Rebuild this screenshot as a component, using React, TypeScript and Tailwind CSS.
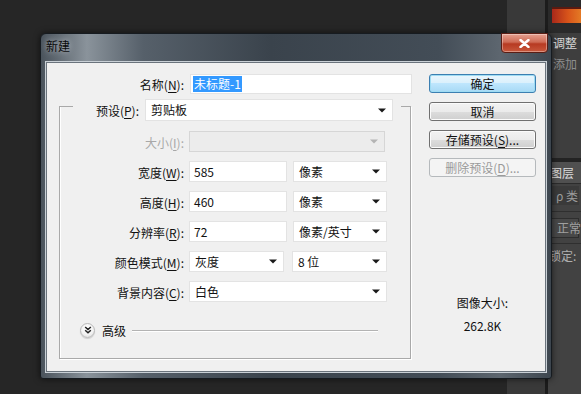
import type { ReactNode } from 'react'

function U({ c }: { c: string }) {
  return <span className="underline underline-offset-[2px]">{c}</span>
}

function Arrow({ dim }: { dim?: boolean }) {
  return (
    <svg width="8" height="5" viewBox="0 0 8 5" className="shrink-0">
      <path d="M0 0.5h8L4 4.5z" fill={dim ? '#b4b4b4' : '#1a1a1a'} />
    </svg>
  )
}

function Combo({ w, text, dim }: { w: string; text?: string; dim?: boolean }) {
  return (
    <div
      className={`flex h-[21px] ${w} items-center justify-between border pl-[5px] pr-[6px] ${
        dim ? 'border-[#d6d6d6] bg-[#ececec]' : 'border-[#e3e3e3] bg-white'
      }`}
    >
      <span className="text-[12px] leading-none text-[#111]">{text}</span>
      <Arrow dim={dim} />
    </div>
  )
}

function Input({ w, children }: { w: string; children?: ReactNode }) {
  return (
    <div className={`flex h-[21px] ${w} items-center border border-[#e3e3e3] bg-white pl-[4px] text-[12px] leading-none text-[#111]`}>
      {children}
    </div>
  )
}

function Row({ label, children, dim, gap = 'gap-[6px]' }: { label: ReactNode; children: ReactNode; dim?: boolean; gap?: string }) {
  return (
    <div className="mt-[9px] flex h-[21px] items-center gap-[5px]">
      <div className={`w-[124px] pt-[2px] text-right text-[12px] leading-none ${dim ? 'text-[#a8a8a8]' : 'text-[#111]'}`}>
        {label}
      </div>
      <div className={`flex ${gap}`}>{children}</div>
    </div>
  )
}

function Btn({ children, kind }: { children: ReactNode; kind?: 'default' | 'disabled' }) {
  const look =
    kind === 'default'
      ? 'border-[#3c7fb1] bg-[linear-gradient(#eaf6fd_0%,#d9f0fc_50%,#bee6fd_50%,#a7d9f5_100%)] shadow-[inset_0_0_0_1px_#9fdcf3] text-[#111]'
      : kind === 'disabled'
        ? 'border-[#b5b9bc] bg-[#f4f4f4] text-[#9a9a9a]'
        : 'border-[#707070] bg-[linear-gradient(#f2f2f2_0%,#ebebeb_50%,#dddddd_50%,#cfcfcf_100%)] shadow-[inset_0_0_0_1px_#fbfbfb] text-[#111]'
  return (
    <div className={`flex h-[19px] w-[107px] items-center justify-center rounded-[3px] border text-[12px] leading-none ${look}`}>
      {children}
    </div>
  )
}

function Dialog() {
  return (
    <div className="absolute left-[40px] top-[33px] flex h-[346px] w-[512px] flex-col rounded-t-[6px] rounded-b-[3px] border border-[#161b20] bg-[linear-gradient(90deg,#4a535c_0%,#8a939b_9%,#56606a_20%,#3a434c_45%,#434d57_78%,#5d666f_90%,#3d464f_100%)] px-[5px] pb-[6px] shadow-[0_0_6px_rgba(0,0,0,0.6)]">
      {/* title bar */}
      <div className="flex h-[28px] shrink-0 items-start justify-between">
        <span className="mt-[6px] text-[12px] leading-none text-[#0a0a0a] [text-shadow:0_0_6px_#c8ced4]">新建</span>
        <div className="-mt-px mr-[-2px] flex h-[20px] w-[47px] items-center justify-center rounded-b-[4px] border border-[#5a1d14] bg-[linear-gradient(#e5a090_0%,#cf6b55_45%,#b73a22_55%,#c8583c_100%)] shadow-[inset_0_0_0_1px_rgba(255,255,255,0.35)]">
          <svg width="11" height="9" viewBox="0 0 11 9">
            <path d="M1.5 1l8 7M9.5 1l-8 7" stroke="#fff" strokeWidth="2.4" strokeLinecap="round" />
          </svg>
        </div>
      </div>

      {/* client area */}
      <div className="flex flex-1 border border-[#6a737c] bg-[#f0f0f0] shadow-[0_0_0_1px_#c9d0d6]">
        {/* left side */}
        <div className="flex w-[382px] shrink-0 flex-col">
          <div className="mt-[11px] flex h-[20px] items-center gap-[6px]">
            <div className="w-[137px] pt-[2px] text-right text-[12px] leading-none text-[#111]">
              名称(<U c="N" />):
            </div>
            <div className="flex h-[20px] w-[222px] items-center border border-[#e3e3e3] bg-white pl-[2px]">
              <span className="bg-[#3399ff] px-[1px] py-[2px] text-[12px] leading-none text-white">未标题-1</span>
            </div>
          </div>

          {/* group box */}
          <div className="ml-[12px] mt-[12px] flex h-[253px] w-[352px] flex-col border-x border-b border-[#a9a9a9] shadow-[inset_1px_0_0_#fff,1px_1px_0_#fff]">
            <div className="-mt-[7px] flex h-[22px] items-start">
              <div className="mt-[7px] h-px w-[13px] bg-[#a9a9a9]" />
              <div className="flex h-[22px] w-[66px] items-center justify-end pt-[2px] text-[12px] leading-none text-[#111]">
                预设(<U c="P" />):
              </div>
              <div className="w-[6px]" />
              <div className="flex h-[22px] w-[248px] items-center justify-between border border-[#e3e3e3] bg-white pl-[5px] pr-[6px]">
                <span className="text-[12px] leading-none text-[#111]">剪贴板</span>
                <Arrow />
              </div>
              <div className="w-[8px]" />
              <div className="mt-[7px] h-px flex-1 bg-[#a9a9a9]" />
            </div>

            <div className="h-[1px]" />
            <Row label={<>大小(<U c="I" />):</>} dim>
              <Combo w="w-[196px]" dim />
            </Row>
            <Row label={<>宽度(<U c="W" />):</>}>
              <Input w="w-[98px]">585</Input>
              <Combo w="w-[94px]" text="像素" />
            </Row>
            <Row label={<>高度(<U c="H" />):</>}>
              <Input w="w-[98px]">460</Input>
              <Combo w="w-[94px]" text="像素" />
            </Row>
            <Row label={<>分辨率(<U c="R" />):</>}>
              <Input w="w-[98px]">72</Input>
              <Combo w="w-[94px]" text="像素/英寸" />
            </Row>
            <Row label={<>颜色模式(<U c="M" />):</>} gap="gap-[8px]">
              <Combo w="w-[95px]" text="灰度" />
              <Combo w="w-[95px]" text="8 位" />
            </Row>
            <Row label={<>背景内容(<U c="C" />):</>}>
              <Combo w="w-[198px]" text="白色" />
            </Row>

            <div className="mt-[20px] flex h-[16px] items-center">
              <div className="ml-[20px] flex h-[15px] w-[15px] items-center justify-center rounded-full border border-[#b9b9b9] bg-[radial-gradient(circle_at_50%_35%,#ffffff_0%,#f3f3f3_55%,#d6d6d6_100%)] shadow-[0_1px_1px_rgba(0,0,0,0.15)]">
                <svg width="8" height="8" viewBox="0 0 8 8">
                  <path d="M1.2 1l2.8 2.6L6.8 1M1.2 4.2l2.8 2.6 2.8-2.6" fill="none" stroke="#222" strokeWidth="1.5" />
                </svg>
              </div>
              <span className="ml-[7px] pt-[1px] text-[12px] leading-none text-[#111]">高级</span>
              <div className="ml-[6px] h-px w-[246px] bg-[#b3b3b3] shadow-[0_1px_0_#fff]" />
            </div>
          </div>
        </div>

        {/* right side */}
        <div className="flex w-[107px] shrink-0 flex-col items-center">
          <div className="mt-[11px] flex flex-col gap-[9px]">
            <Btn kind="default">确定</Btn>
            <Btn>取消</Btn>
            <Btn>
              存储预设(<U c="S" />)...
            </Btn>
            <Btn kind="disabled">
              删除预设(<U c="D" />)...
            </Btn>
          </div>
          <div className="mt-[118px] text-[12px] leading-[16px] text-[#111]">图像大小:</div>
          <div className="mt-[7px] text-[12px] leading-[16px] text-[#111]">262.8K</div>
        </div>
      </div>
    </div>
  )
}

function SidePanel() {
  return (
    <div className="flex w-[33px] shrink-0 flex-col overflow-hidden whitespace-nowrap bg-[#424242] text-[12px] leading-none">
      <div className="h-[33px] shrink-0 bg-[#2a2a2a] pt-[7px]">
        <div className="ml-[4px] h-[16px] w-[40px] bg-[linear-gradient(90deg,#a8281a_0%,#d8541a_40%,#ee9a2e_100%)] shadow-[inset_0_2px_0_#5a1a10]" />
      </div>
      <div className="flex h-[125px] shrink-0 flex-col bg-[#3e3e3e] pl-[5px]">
        <span className="mt-[4px] text-[#d8d8d8]">调整</span>
        <span className="mt-[9px] text-[#8e8e8e]">添加</span>
      </div>
      <div className="h-[4px] shrink-0 bg-[#232323]" />
      <div className="flex h-[21px] shrink-0 items-center bg-[#505050] pl-[2px] text-[#dcdcdc]">图层</div>
      <div className="h-px shrink-0 bg-[#2c2c2c]" />
      <div className="mx-[2px] mt-[2px] flex h-[19px] shrink-0 items-center bg-[#3a3a3a] pl-[6px] text-[#9a9a9a]">ρ 类</div>
      <div className="mt-[6px] h-px shrink-0 bg-[#2f2f2f]" />
      <div className="mx-[2px] mt-[6px] flex h-[20px] shrink-0 items-center border border-[#2e2e2e] bg-[#484848] pl-[6px] text-[#a0a0a0]">
        正常
      </div>
      <div className="mt-[5px] h-px shrink-0 bg-[#2f2f2f]" />
      <div className="mt-[6px] pl-[1px] text-[#b0b0b0]">锁定:</div>
    </div>
  )
}

export default function App() {
  return (
    <div className="relative flex h-[394px] w-[581px] overflow-hidden bg-[#262626] font-['Noto_Sans_CJK_SC',sans-serif]">
      <div className="flex-1" />
      <div className="w-[38px] shrink-0 bg-[#393939]" />
      <div className="w-[3px] shrink-0 bg-[#1c1c1c]" />
      <SidePanel />
      <Dialog />
    </div>
  )
}
